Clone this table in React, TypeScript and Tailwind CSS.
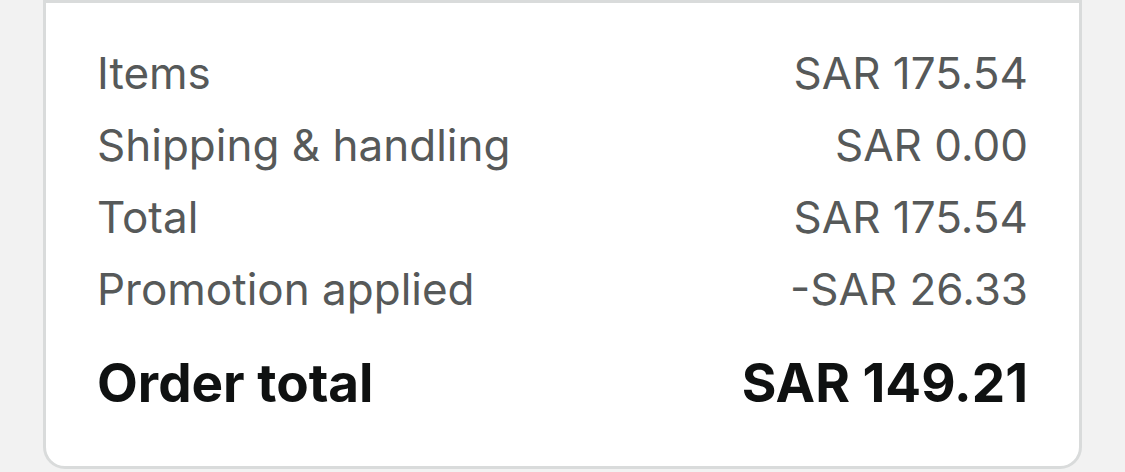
import React from 'react';

const rows = [
  { label: 'Items', value: 'SAR 175.54' },
  { label: 'Shipping & handling', value: 'SAR 0.00' },
  { label: 'Total', value: 'SAR 175.54' },
  { label: 'Promotion applied', value: '-SAR 26.33' },
];

const App: React.FC = () => {
  return (
    <div className="w-[1125px] h-[472px] bg-[#f2f2f2] overflow-hidden font-['Inter',sans-serif]">
      <div className="mx-[43px] h-[469px] bg-white border-[3px] border-[#d9dbdb] rounded-b-[22px] px-[51px] pt-[34px]">
        {rows.map((r) => (
          <div key={r.label} className="flex justify-between items-center h-[72px] text-[44px] text-[#565959]">
            <span>{r.label}</span>
            <span>{r.value}</span>
          </div>
        ))}
        <div className="flex justify-between items-center h-[72px] mt-[23px] text-[53px] font-bold text-[#0f1111]">
          <span>Order total</span>
          <span>SAR 149.21</span>
        </div>
      </div>
    </div>
  );
};

export default App;
